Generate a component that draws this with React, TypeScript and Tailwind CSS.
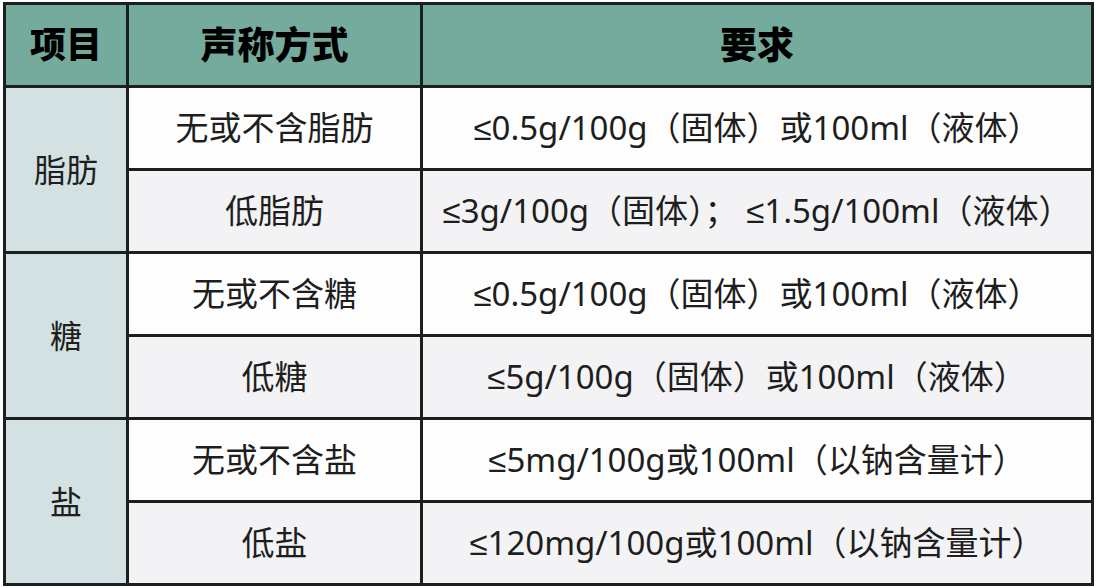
const rows = [
  { group: "脂肪", claim: "无或不含脂肪", req: "≤0.5g/100g（固体）或100ml（液体）" },
  { group: "", claim: "低脂肪", req: "≤3g/100g（固体）； ≤1.5g/100ml（液体）" },
  { group: "糖", claim: "无或不含糖", req: "≤0.5g/100g（固体）或100ml（液体）" },
  { group: "", claim: "低糖", req: "≤5g/100g（固体）或100ml（液体）" },
  { group: "盐", claim: "无或不含盐", req: "≤5mg/100g或100ml（以钠含量计）" },
  { group: "", claim: "低盐", req: "≤120mg/100g或100ml（以钠含量计）" },
];

// the CJK font draws ≤ slanted; the picture has the plain form
function Req({ text }: { text: string }) {
  return (
    <>
      {text.split(/(≤)/).map((part, i) =>
        part === "≤" ? (
          <span key={i} className="font-['Liberation_Sans',sans-serif]">≤</span>
        ) : (
          <span key={i}>{part}</span>
        ),
      )}
    </>
  );
}

export default function App() {
  return (
    <div className="w-[1096px] h-[588px] bg-white pt-[2px] pl-[3px] font-['Noto_Sans','Noto_Sans_CJK_SC',sans-serif] text-[#1e1e1e]">
      <table className="w-[1091px] table-fixed border-collapse border-[3px] border-[#1b1f1e]">
        <colgroup>
          <col className="w-[123px]" />
          <col className="w-[294px]" />
          <col />
        </colgroup>
        <thead>
          <tr className="h-[83px] bg-[#74ab9c]">
            <th className="border-[3px] border-[#1b1f1e] text-[36px] font-black text-black">项目</th>
            <th className="border-[3px] border-[#1b1f1e] text-[37px] font-black text-black">声称方式</th>
            <th className="border-[3px] border-[#1b1f1e] text-[37px] font-black text-black">要求</th>
          </tr>
        </thead>
        <tbody>
          {rows.map((r, i) => (
            <tr key={i} className={`h-[83px] ${i % 2 === 0 ? "bg-[#fdfdfd]" : "bg-[#f3f3f5]"}`}>
              {r.group && (
                <td rowSpan={2} className="border-[3px] border-[#1b1f1e] bg-[#d3e1e2] text-center text-[32px]">
                  {r.group}
                </td>
              )}
              <td className="border-[3px] border-[#1b1f1e] text-center text-[33px]">{r.claim}</td>
              <td className="border-[3px] border-[#1b1f1e] text-center text-[33px] whitespace-nowrap">
                <Req text={r.req} />
              </td>
            </tr>
          ))}
        </tbody>
      </table>
    </div>
  );
}
